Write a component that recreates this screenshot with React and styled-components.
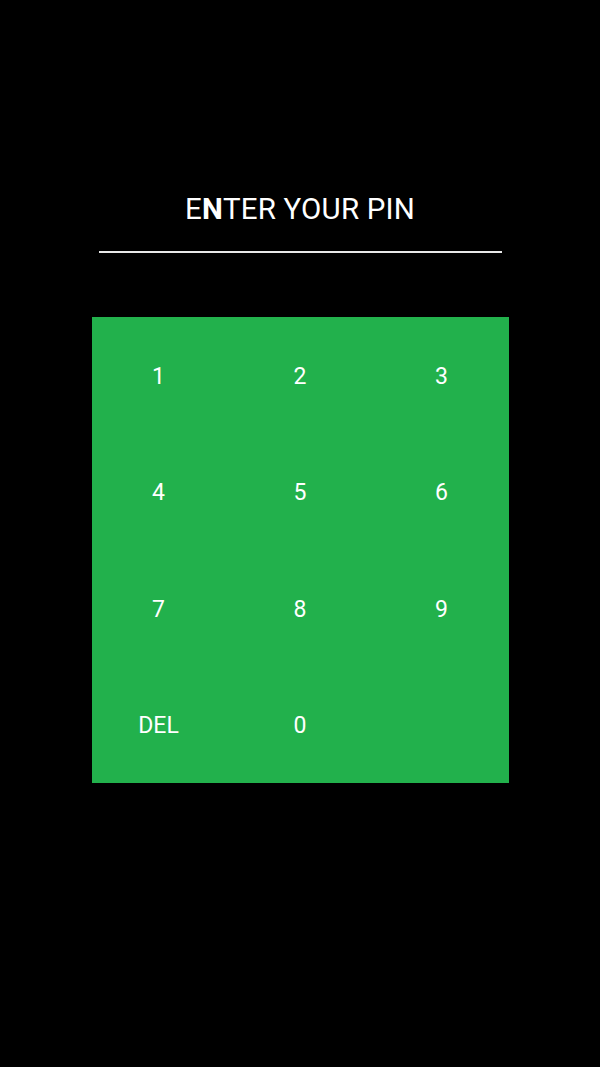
import React from 'react';
import styled, { createGlobalStyle } from 'styled-components';

const GlobalStyle = createGlobalStyle`
  html, body {
    margin: 0;
    padding: 0;
    background: #000;
  }
  body {
    font-family: Roboto, "Liberation Sans", sans-serif;
    color: #fff;
  }
`;

const keys = ['1', '2', '3', '4', '5', '6', '7', '8', '9', 'DEL', '0', ''];

const App = () => (
  <>
    <GlobalStyle />
    <Page>
      <Header>
        <Title>
          E<Strong>N</Strong>TER YOUR PIN
        </Title>
        <Divider />
      </Header>
      <Pad>
        {keys.map((key, i) => (
          <Key key={i} type="button" disabled={!key}>
            {key}
          </Key>
        ))}
      </Pad>
    </Page>
  </>
);

const Page = styled.div`
  display: flex;
  flex-direction: column;
  align-items: center;
  min-height: 1067px;
  padding-top: 189px;
  box-sizing: border-box;
`;

const Header = styled.div`
  display: flex;
  flex-direction: column;
  align-items: center;
  width: 403px;
`;

const Title = styled.h1`
  margin: 0;
  font-size: 29.5px;
  font-weight: 400;
  line-height: 40px;
  letter-spacing: 0.2px;
`;

const Strong = styled.span`
  font-weight: 700;
`;

const Divider = styled.div`
  width: 100%;
  height: 2px;
  margin-top: 22px;
  background: #e8e8e8;
`;

const Pad = styled.div`
  display: grid;
  grid-template-columns: repeat(3, 141.5px);
  grid-auto-rows: 116.5px;
  justify-content: center;
  width: 417px;
  margin-top: 63.5px;
  background: #22b14c;
`;

const Key = styled.button`
  display: flex;
  align-items: center;
  justify-content: center;
  padding: 3px 0 0;
  border: 0;
  background: transparent;
  color: #fff;
  font-family: Roboto, "Liberation Sans", sans-serif;
  font-size: 23px;
  cursor: pointer;

  &:disabled {
    cursor: default;
  }
`;

export default App;
